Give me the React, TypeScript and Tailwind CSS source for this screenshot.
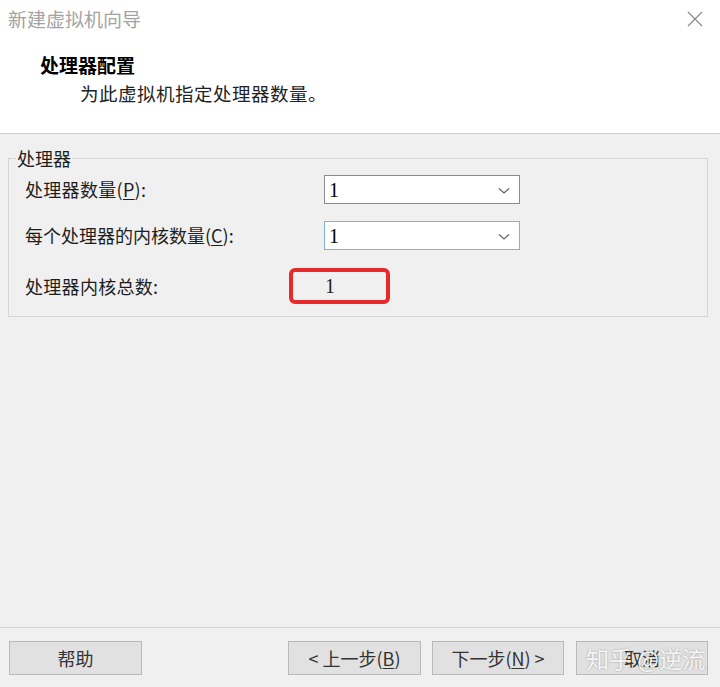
import React from 'react'

const cjk = { fontFamily: '"Noto Sans CJK SC", "Noto Sans", sans-serif' }

function Combo({ focused }: { focused?: boolean }) {
    return (
        <div
            className={
                'flex h-[29px] w-[196px] items-center justify-between bg-white pl-[4px] pr-[9px] border ' +
                (focused ? 'border-[#7fb0d8]' : 'border-[#8a8a8a]')
            }
        >
            <span className="text-[20px] leading-none text-black" style={{ fontFamily: '"Liberation Serif", serif' }}>1</span>
            <svg width="12" height="8" viewBox="0 0 12 8" className="mt-[2px]">
                <path d="M1 1.5 L6 6 L11 1.5" fill="none" stroke="#606060" strokeWidth="1.1" />
            </svg>
        </div>
    )
}

function Btn({ children, w }: { children: React.ReactNode; w: string }) {
    return (
        <div className={`flex h-[34px] ${w} items-center justify-center border border-[#b9b9b9] bg-[#e1e1e1] text-[18px] text-[#333]`}>
            {children}
        </div>
    )
}

export default function App() {
    return (
        <div className="flex h-[687px] w-[720px] flex-col overflow-hidden bg-[#f0f0f0] text-[#1e1e1e]" style={cjk}>
            {/* header */}
            <div className="h-[134px] shrink-0 border-b border-[#cfcfcf] bg-white">
                <div className="flex h-[38px] items-center justify-between pl-[8px] pr-[17px]">
                    <span className="text-[19px] text-[#a3a3a3]">新建虚拟机向导</span>
                    <svg width="16" height="16" viewBox="0 0 16 16">
                        <path d="M1 1 L15 15 M15 1 L1 15" stroke="#8a8a8a" strokeWidth="1.2" />
                    </svg>
                </div>
                <div className="mt-[14px] pl-[40px] text-[19px] font-bold leading-[26px] text-black">处理器配置</div>
                <div className="mt-[2px] pl-[80px] text-[18.5px] leading-[26px] tracking-[0.5px] text-[#222]">为此虚拟机指定处理器数量。</div>
            </div>

            {/* content */}
            <div className="flex-1">
                <div className="relative ml-[8px] mt-[24px] h-[159px] w-[700px] border border-[#d6d6d6] pl-[16px] pt-[16px]">
                    <span className="absolute left-[7px] top-[-13px] bg-[#f0f0f0] px-[1px] text-[18px] leading-[24px]">处理器</span>

                    <div className="flex h-[29px] items-center">
                        <span className="w-[299px] text-[18px] tracking-[0.3px]">
                            处理器数量(<span className="underline underline-offset-2">P</span>):
                        </span>
                        <Combo />
                    </div>

                    <div className="mt-[17px] flex h-[29px] items-center">
                        <span className="w-[299px] text-[18px]">
                            每个处理器的内核数量(<span className="underline underline-offset-2">C</span>):
                        </span>
                        <Combo focused />
                    </div>

                    <div className="mt-[18px] flex h-[36px] items-center">
                        <span className="w-[264px] text-[18px] tracking-[0.3px]">处理器内核总数:</span>
                        <div className="flex h-[36px] w-[101px] items-center rounded-[6px] border-[4px] border-[#e62a2a] pl-[32px]">
                            <span className="text-[20px] leading-none" style={{ fontFamily: '"Liberation Serif", serif' }}>1</span>
                        </div>
                    </div>
                </div>
            </div>

            {/* footer */}
            <div className="relative h-[60px] shrink-0 border-t border-[#d4d4d4] pt-[13px]">
                <div className="flex items-center pl-[9px]">
                    <Btn w="w-[133px]">帮助</Btn>
                    <div className="ml-[146px] flex gap-[11px]">
                        <Btn w="w-[133px]">
                            &lt; 上一步(<span className="underline underline-offset-2">B</span>)
                        </Btn>
                        <Btn w="w-[132px]">
                            下一步(<span className="underline underline-offset-2">N</span>) &gt;
                        </Btn>
                        <div className="ml-[1px]">
                            <Btn w="w-[132px]">取消</Btn>
                        </div>
                    </div>
                </div>
                <span
                    className="absolute left-[586px] top-[14px] whitespace-nowrap text-[23px] leading-[32px] text-white/90"
                    style={{ textShadow: '0 0 2px rgba(0,0,0,0.35)' }}
                >
                    知乎 @逆流
                </span>
            </div>
        </div>
    )
}
